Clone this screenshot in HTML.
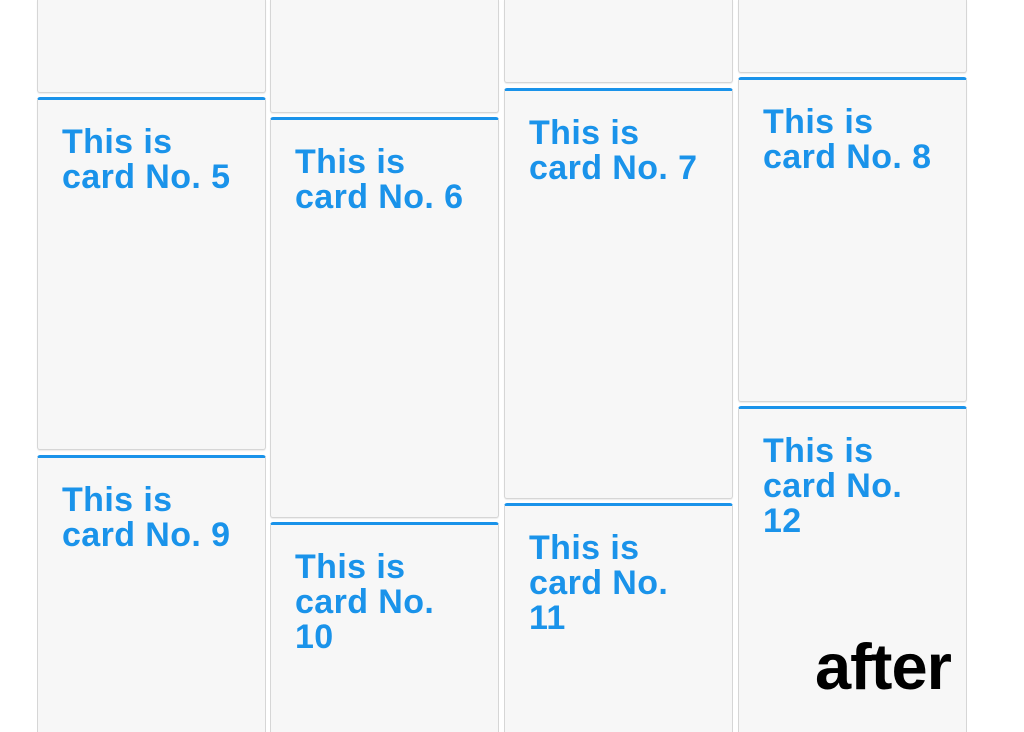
<!DOCTYPE html>
<html><head><style>
html,body{margin:0;padding:0;width:1024px;height:732px;overflow:hidden;background:#fff;font-family:"Liberation Sans",Arial,sans-serif}
#w{position:relative;width:1024px;height:732px;overflow:hidden}
.c{position:absolute;width:229px;background:#f7f7f7;border:1px solid #d6d6d6;border-top:3px solid #1a93ea;border-radius:3px;box-sizing:border-box;box-shadow:0 1px 1px rgba(0,0,0,.08)}
.c.b{border-bottom:none;border-radius:3px 3px 0 0;box-shadow:none}
.c.t{border-top:none;border-radius:0 0 3px 3px}
.c p{margin:0;padding:25px 6px 0 24px;color:#1a93ea;font-weight:bold;font-size:34px;line-height:35px;letter-spacing:0.4px}
.after{position:absolute;left:815px;top:634px;font-weight:bold;font-size:65px;line-height:66px;color:#000;letter-spacing:-1px}
</style></head><body><div id="w">
<div class="c t" style="left:37px;top:0;height:93px"></div>
<div class="c t" style="left:270px;top:0;height:113px"></div>
<div class="c t" style="left:504px;top:0;height:83px"></div>
<div class="c t" style="left:738px;top:0;height:73px"></div>

<div class="c" style="left:37px;top:97px;height:353px"><p>This is<br>card No. 5</p></div>
<div class="c" style="left:270px;top:117px;height:401px"><p>This is<br>card No. 6</p></div>
<div class="c" style="left:504px;top:88px;height:411px"><p>This is<br>card No. 7</p></div>
<div class="c" style="left:738px;top:77px;height:325px"><p>This is<br>card No. 8</p></div>

<div class="c b" style="left:37px;top:455px;height:277px"><p>This is<br>card No. 9</p></div>
<div class="c b" style="left:270px;top:522px;height:210px"><p>This is<br>card No.<br>10</p></div>
<div class="c b" style="left:504px;top:503px;height:229px"><p>This is<br>card No.<br>11</p></div>
<div class="c b" style="left:738px;top:406px;height:326px"><p>This is<br>card No.<br>12</p></div>
<div class="after">after</div>
</div></body></html>
